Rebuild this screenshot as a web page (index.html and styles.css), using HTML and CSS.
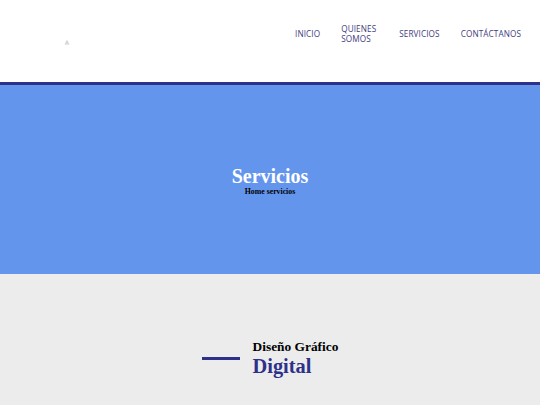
FILE: index.html
```html
<!DOCTYPE html>
<html lang="es">
<head>
<meta charset="utf-8">
<title>Servicios</title>
<link rel="stylesheet" href="styles.css">
</head>
<body>
<header class="header">
  <div class="logo">
    <svg width="6" height="6" viewBox="0 0 6 6" aria-hidden="true">
      <path d="M0.5 5.5 L2 2.5 L3 1 L4 2.5 L5.5 5.5 Z" fill="#d0d0d0"/>
      <rect x="1.5" y="3.5" width="1" height="1" fill="#f2f2f2"/>
      <rect x="3.5" y="3.5" width="1" height="1" fill="#f2f2f2"/>
    </svg>
  </div>
  <nav class="nav">
    <a class="nav-item" href="#">INICIO</a>
    <a class="nav-item nav-wrap" href="#">QUIENES SOMOS</a>
    <a class="nav-item" href="#">SERVICIOS</a>
    <a class="nav-item" href="#">CONTÁCTANOS</a>
  </nav>
</header>
<section class="hero">
  <h1 class="hero-title">Servicios</h1>
  <p class="hero-crumb">Home servicios</p>
</section>
<section class="services">
  <div class="service-head">
    <span class="service-line"></span>
    <div class="service-text">
      <h4 class="service-sub">Diseño Gráfico</h4>
      <h2 class="service-title">Digital</h2>
    </div>
  </div>
</section>
</body>
</html>
```
FILE: styles.css
```css
* { box-sizing: border-box; }
html, body { margin: 0; padding: 0; }
body {
  width: 540px;
  height: 405px;
  overflow: hidden;
  background: #ececec;
  font-family: "Liberation Serif", "Times New Roman", serif;
}
.header {
  height: 85px;
  background: #ffffff;
  border-bottom: 3px solid #2e3189;
  display: flex;
  justify-content: space-between;
  align-items: flex-start;
}
.logo {
  padding: 39px 0 0 64px;
  line-height: 0;
}
.nav {
  display: flex;
  align-items: center;
  gap: 21px;
  padding: 24px 19px 0 0;
  height: 44px;
}
.nav-item {
  font-family: "Open Sans", "DejaVu Sans", sans-serif;
  font-size: 8.2px;
  line-height: 10px;
  color: #3f3c80;
  text-decoration: none;
  letter-spacing: 0.1px;
}
.nav-wrap {
  width: 37px;
}
.hero {
  height: 189px;
  background: #6495ed;
  display: flex;
  flex-direction: column;
  align-items: center;
  justify-content: center;
  padding-top: 2px;
}
.hero-title {
  margin: 0;
  color: #ffffff;
  font-size: 20px;
  line-height: 22px;
  font-weight: bold;
}
.hero-crumb {
  margin: 0;
  color: #000000;
  font-size: 7.8px;
  line-height: 10px;
  font-weight: bold;
}
.services {
  padding-top: 65px;
  display: flex;
  justify-content: center;
}
.service-head {
  display: flex;
  align-items: center;
  gap: 13px;
}
.service-line {
  width: 38px;
  height: 3px;
  background: #2e3189;
}
.service-sub {
  margin: 0;
  font-size: 13.4px;
  line-height: 16px;
  color: #000000;
  font-weight: bold;
}
.service-title {
  margin: 0;
  font-size: 20.4px;
  line-height: 22px;
  color: #2e3189;
  font-weight: bold;
}
```
